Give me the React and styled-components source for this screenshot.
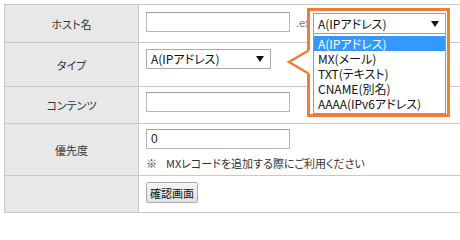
import React from "react";
import styled, { createGlobalStyle } from "styled-components";

const GlobalStyle = createGlobalStyle`
  html, body {
    margin: 0;
    padding: 0;
    background: #fff;
    overflow: hidden;
  }
  body {
    font-family: "Noto Sans CJK JP", "Liberation Sans", sans-serif;
    font-size: 11px;
    color: #333;
    font-feature-settings: "palt";
  }
`;

const ORANGE = "#ef7d37";

const Page = styled.div`
  position: relative;
  width: 460px;
  height: 217px;
  padding: 4px 0 0 4px;
  box-sizing: border-box;
`;

const Table = styled.div`
  width: 480px;
  border: 1px solid #c8c8c8;
  border-right: none;
`;

const Row = styled.div`
  display: grid;
  grid-template-columns: 134px 1fr;
  height: ${(p) => p.h}px;
  & + & {
    border-top: 1px solid #c8c8c8;
  }
`;

const Label = styled.div`
  background: #e8e8e8;
  border-right: 1px solid #c8c8c8;
  display: flex;
  align-items: center;
  justify-content: center;
  color: #333;
`;

const Cell = styled.div`
  padding: ${(p) => p.pad}px 0 0 7px;
  display: flex;
  flex-direction: column;
  align-items: flex-start;
`;

const Inline = styled.div`
  display: flex;
  align-items: center;
  white-space: nowrap;
`;

const TextInput = styled.div`
  width: 144px;
  height: 20px;
  box-sizing: border-box;
  border: 1px solid #b5b5b5;
  border-top-color: #a0a0a0;
  background: #fff;
  padding: 0 4px;
  display: flex;
  align-items: center;
  font-family: "Liberation Sans", sans-serif;
  font-size: 12px;
  color: #222;
`;

const Domain = styled.span`
  margin-left: 6px;
  color: #777;
  font-size: 11px;
`;

const SelectBox = styled.div`
  width: ${(p) => p.w}px;
  height: ${(p) => p.hgt}px;
  box-sizing: border-box;
  border: 1px solid ${(p) => (p.focus ? "#7aa7dc" : "#a9a9a9")};
  background: #fff;
  display: flex;
  align-items: center;
  justify-content: space-between;
  padding: 0 6px 0 4px;
  font-size: 12px;
  line-height: 1;
  color: #111;
`;

const Arrow = styled.span`
  width: 0;
  height: 0;
  border-left: 4px solid transparent;
  border-right: 4px solid transparent;
  border-top: 6px solid #111;
`;

const Note = styled.div`
  margin-top: 6px;
  font-size: 11px;
  color: #333;
  white-space: nowrap;
  span {
    margin-right: 9px;
  }
`;

const Button = styled.div`
  height: 21px;
  box-sizing: border-box;
  padding: 0 3px;
  border: 1px solid #acacac;
  border-radius: 2px;
  background: linear-gradient(#f4f4f4, #e2e2e2);
  display: flex;
  align-items: center;
  font-size: 11px;
  color: #111;
`;

const Callout = styled.div`
  position: absolute;
  left: 307px;
  top: 8px;
  width: 143px;
  height: 109px;
  box-sizing: border-box;
  border: 3px solid ${ORANGE};
  background: #fff;
  padding: 2px 1px 0 3px;
`;

const Pointer = styled.svg`
  position: absolute;
  left: 287px;
  top: 49px;
`;

const List = styled.div`
  width: 133px;
  box-sizing: border-box;
  border: 1px solid #7b9dd0;
  border-top: none;
  padding: 2px 0 2px;
  background: #fff;
`;

const Option = styled.div`
  height: 15px;
  display: flex;
  align-items: center;
  line-height: 1;
  padding-left: 4px;
  font-size: 12px;
  color: ${(p) => (p.active ? "#fff" : "#111")};
  background: ${(p) => (p.active ? "#3399ff" : "transparent")};
`;

const types = [
  "A(IPアドレス)",
  "MX(メール)",
  "TXT(テキスト)",
  "CNAME(別名)",
  "AAAA(IPv6アドレス)",
];

export default function App() {
  return (
    <Page>
      <GlobalStyle />
      <Table>
        <Row h={37}>
          <Label>ホスト名</Label>
          <Cell pad={7}>
            <Inline>
              <TextInput />
              <Domain>.ex</Domain>
            </Inline>
          </Cell>
        </Row>
        <Row h={43}>
          <Label>タイプ</Label>
          <Cell pad={6}>
            <SelectBox w={125} hgt={20}>
              {types[0]}
              <Arrow />
            </SelectBox>
          </Cell>
        </Row>
        <Row h={36}>
          <Label>コンテンツ</Label>
          <Cell pad={5}>
            <TextInput />
          </Cell>
        </Row>
        <Row h={51}>
          <Label>優先度</Label>
          <Cell pad={5}>
            <TextInput>0</TextInput>
            <Note>
              <span>※</span>MXレコードを追加する際にご利用ください
            </Note>
          </Cell>
        </Row>
        <Row h={36}>
          <Label />
          <Cell pad={6}>
            <Button>確認画面</Button>
          </Cell>
        </Row>
      </Table>

      <Callout>
        <SelectBox w={133} hgt={21} focus>
          {types[0]}
          <Arrow />
        </SelectBox>
        <List>
          {types.map((t, i) => (
            <Option key={t} active={i === 0}>
              {t}
            </Option>
          ))}
        </List>
      </Callout>
      <Pointer width="25" height="26" viewBox="0 0 25 26">
        <polygon points="2,13 21,1.5 25,1.5 25,24.5 21,24.5" fill="#fff" />
        <polyline
          points="21.5,1.5 2,13 21.5,24.5"
          fill="none"
          stroke={ORANGE}
          strokeWidth="2.5"
        />
      </Pointer>
    </Page>
  );
}
